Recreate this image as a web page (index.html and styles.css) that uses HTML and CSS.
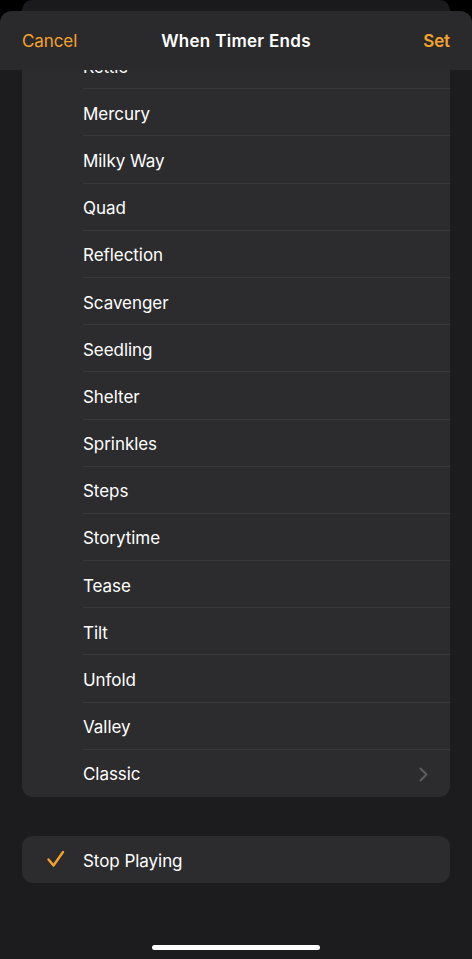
FILE: index.html
```html
<!DOCTYPE html>
<html>
<head>
<meta charset="utf-8">
<link rel="stylesheet" href="styles.css">
</head>
<body>
<div class="behind"></div>
<div class="sheet">
  <header class="nav">
    <span class="nav-btn">Cancel</span>
    <span class="nav-title">When Timer Ends</span>
    <span class="nav-btn bold">Set</span>
  </header>
  <ul class="list tones">
    <li class="row"><span class="label">Kettle</span></li>
    <li class="row"><span class="label">Mercury</span></li>
    <li class="row"><span class="label">Milky Way</span></li>
    <li class="row"><span class="label">Quad</span></li>
    <li class="row"><span class="label">Reflection</span></li>
    <li class="row"><span class="label">Scavenger</span></li>
    <li class="row"><span class="label">Seedling</span></li>
    <li class="row"><span class="label">Shelter</span></li>
    <li class="row"><span class="label">Sprinkles</span></li>
    <li class="row"><span class="label">Steps</span></li>
    <li class="row"><span class="label">Storytime</span></li>
    <li class="row"><span class="label">Tease</span></li>
    <li class="row"><span class="label">Tilt</span></li>
    <li class="row"><span class="label">Unfold</span></li>
    <li class="row"><span class="label">Valley</span></li>
    <li class="row"><span class="label">Classic</span>
      <svg class="chev" width="9" height="15" viewBox="0 0 9 15"><path d="M1.5 1.5 L7.5 7.5 L1.5 13.5" fill="none" stroke="#5c5c61" stroke-width="2" stroke-linecap="round" stroke-linejoin="round"/></svg>
    </li>
  </ul>
  <ul class="list stop">
    <li class="row">
      <svg class="check" width="20" height="18" viewBox="0 0 20 18"><path d="M2.5 9.5 L7.5 15.5 L17 2" fill="none" stroke="#f5a22c" stroke-width="2.4" stroke-linecap="round" stroke-linejoin="round"/></svg>
      <span class="label">Stop Playing</span>
    </li>
  </ul>
  <div class="home"></div>
</div>
</body>
</html>
```
FILE: styles.css
```css
* { box-sizing: border-box; }
html, body { margin: 0; padding: 0; }
body {
  background: #000;
  width: 472px;
  height: 959px;
  overflow: hidden;
  font-family: Inter, "Liberation Sans", sans-serif;
  color: #fff;
}
.behind {
  height: 11px;
  margin: 0 22px;
  background: #1a1a1c;
  border-radius: 10px 10px 0 0;
}
.sheet {
  position: relative;
  height: 948px;
  background: #1c1c1e;
  border-radius: 12px 12px 0 0;
  overflow: hidden;
  padding-top: 31px;
}
.nav {
  position: absolute;
  top: 0; left: 0; right: 0;
  height: 59px;
  z-index: 2;
  background: #2a2a2c;
  display: flex;
  align-items: center;
  justify-content: space-between;
  padding: 1px 22px 0;
  font-size: 17px;
}
.nav-btn { color: #f5a22c; letter-spacing: -0.1px; }
.nav-btn.bold { font-weight: 600; }
.nav-title {
  position: absolute;
  left: 0; right: 0;
  text-align: center;
  font-weight: 600;
  letter-spacing: 0.3px;
  pointer-events: none;
}
.list {
  list-style: none;
  margin: 0 22px;
  padding: 0;
  background: #2c2c2e;
  border-radius: 0 0 11px 11px;
}
.row {
  position: relative;
  height: 47.2px;
  display: flex;
  align-items: center;
  padding-left: 61px;
  padding-right: 22px;
  padding-top: 2px;
  font-size: 17px;
  letter-spacing: -0.05px;
}
.tones .row:not(:last-child)::after {
  content: "";
  position: absolute;
  left: 61px; right: 0; bottom: 0;
  height: 1px;
  background: #38383b;
}
.label { flex: 1; }
.chev { flex: none; }
.stop {
  margin-top: 39px;
  border-radius: 11px;
}
.stop .row { height: 47px; }
.check {
  position: absolute;
  left: 24px;
  top: 14px;
}
.home {
  position: absolute;
  left: 152px;
  top: 934px;
  width: 168px;
  height: 5px;
  border-radius: 3px;
  background: #fff;
}
```
